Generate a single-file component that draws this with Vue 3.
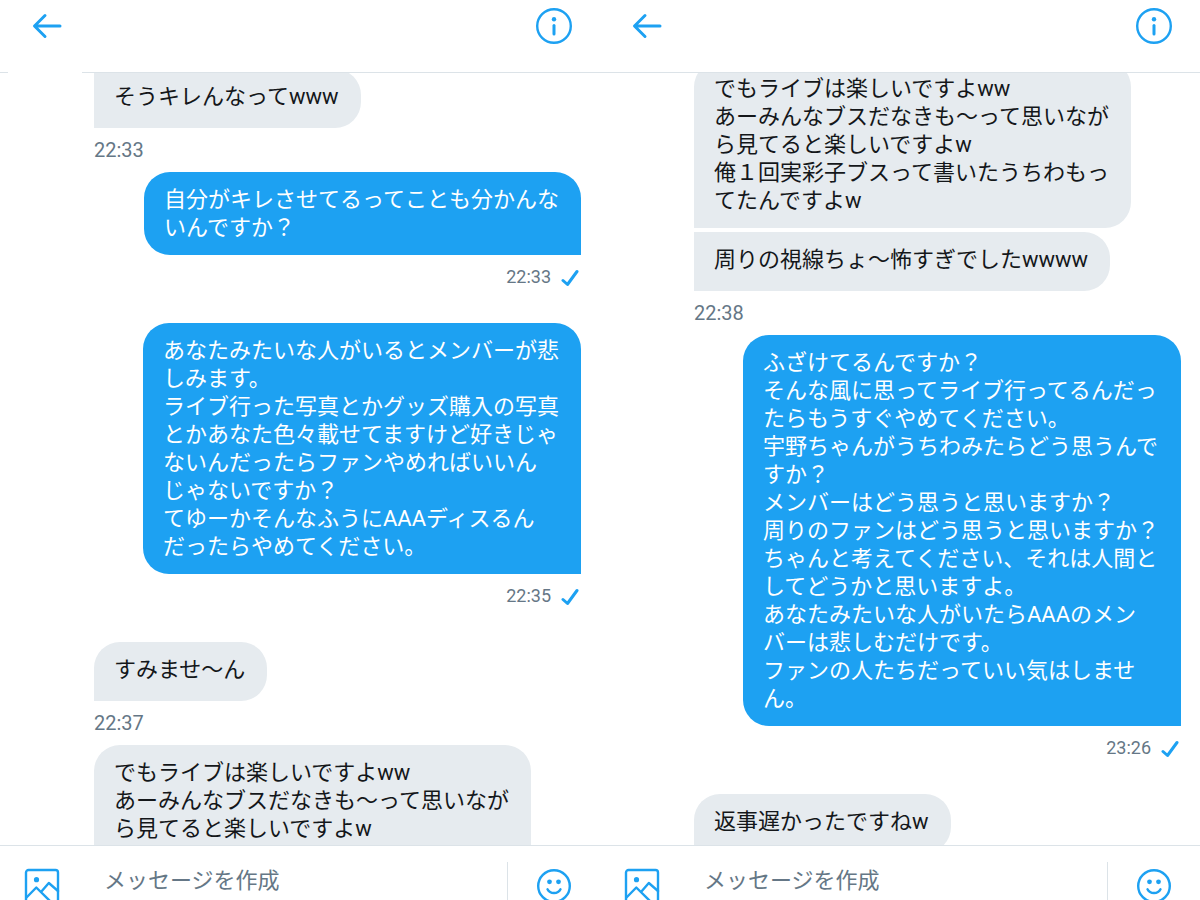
<template>
  <main class="screens">
    <section v-for="screen in screens" :key="screen.id" class="screen">
      <header class="top-bar">
        <button type="button" class="icon-button" aria-label="戻る">
          <svg width="30" height="30" viewBox="0 0 30 30" class="icon arrow">
            <path d="M28 15H3M13 4.500L2.500 15L13 25.500" />
          </svg>
        </button>
        <button type="button" class="icon-button" aria-label="情報">
          <svg width="38" height="38" viewBox="0 0 38 38" class="icon">
            <circle cx="19" cy="19" r="16.800" />
            <circle cx="19" cy="12.300" r="2.200" class="solid" />
            <path d="M19 18.500V27" class="thick" />
          </svg>
        </button>
      </header>
      <div class="divider" :class="{ broken: screen.brokenDivider }"></div>

      <div class="thread">
        <div class="messages" :class="screen.scroll">
          <div
            v-for="message in screen.messages"
            :key="message.id"
            class="message"
            :class="message.from"
          >
            <p class="bubble" :class="message.shape">{{ message.lines.join('\n') }}</p>
            <div v-if="message.time" class="meta">
              <time>{{ message.time }}</time>
              <svg v-if="message.from === 'me'" width="18" height="18" viewBox="0 0 18 18" class="icon check">
                <path d="M2 11.500L6.500 15.500L16 2.500" />
              </svg>
            </div>
          </div>
        </div>
      </div>

      <form class="composer" @submit.prevent>
        <button type="button" class="icon-button photo" aria-label="画像を追加">
          <svg width="36" height="36" viewBox="0 0 36 36" class="icon">
            <rect x="2" y="2" width="32" height="32" rx="2.500" />
            <circle cx="12.500" cy="11.700" r="2.600" class="solid" />
            <path d="M2.500 29.500L12.300 19.500L26.500 33.500M17 24L24.800 15L34 23" />
          </svg>
        </button>
        <input v-model="drafts[screen.id]" type="text" placeholder="メッセージを作成" aria-label="メッセージを作成" />
        <button type="button" class="icon-button emoji" aria-label="絵文字">
          <svg width="36" height="36" viewBox="0 0 36 36" class="icon">
            <circle cx="18" cy="18" r="15.800" />
            <circle cx="13.500" cy="13.800" r="2.400" class="solid" />
            <circle cx="22.500" cy="13.800" r="2.400" class="solid" />
            <path d="M11.500 21.300C14 26.300 22 26.300 24.500 21.300" />
          </svg>
        </button>
      </form>
    </section>
  </main>
</template>

<script setup>
import { ref } from 'vue';

const drafts = ref({ first: '', second: '' });

const screens = [
  {
    id: 'first',
    scroll: 'scroll-short',
    brokenDivider: true,
    messages: [
      { id: 1, from: 'them', shape: 'joined', time: '22:33', lines: ['そうキレんなってwww'] },
      { id: 2, from: 'me', time: '22:33', lines: ['自分がキレさせてるってことも分かんな', 'いんですか？'] },
      {
        id: 3,
        from: 'me',
        time: '22:35',
        lines: [
          'あなたみたいな人がいるとメンバーが悲',
          'しみます。',
          'ライブ行った写真とかグッズ購入の写真',
          'とかあなた色々載せてますけど好きじゃ',
          'ないんだったらファンやめればいいん',
          'じゃないですか？',
          'てゆーかそんなふうにAAAディスるん',
          'だったらやめてください。',
        ],
      },
      { id: 4, from: 'them', time: '22:37', lines: ['すみませ〜ん'] },
      {
        id: 5,
        from: 'them',
        shape: 'cut',
        lines: ['でもライブは楽しいですよww', 'あーみんなブスだなきも〜って思いなが', 'ら見てると楽しいですよw'],
      },
    ],
  },
  {
    id: 'second',
    scroll: 'scroll-long',
    brokenDivider: false,
    messages: [
      {
        id: 6,
        from: 'them',
        lines: [
          'でもライブは楽しいですよww',
          'あーみんなブスだなきも〜って思いなが',
          'ら見てると楽しいですよw',
          '俺１回実彩子ブスって書いたうちわもっ',
          'てたんですよw',
        ],
      },
      { id: 7, from: 'them', shape: 'joined', time: '22:38', lines: ['周りの視線ちょ〜怖すぎでしたwwww'] },
      {
        id: 8,
        from: 'me',
        time: '23:26',
        lines: [
          'ふざけてるんですか？',
          'そんな風に思ってライブ行ってるんだっ',
          'たらもうすぐやめてください。',
          '宇野ちゃんがうちわみたらどう思うんで',
          'すか？',
          'メンバーはどう思うと思いますか？',
          '周りのファンはどう思うと思いますか？',
          'ちゃんと考えてください、それは人間と',
          'してどうかと思いますよ。',
          'あなたみたいな人がいたらAAAのメン',
          'バーは悲しむだけです。',
          'ファンの人たちだっていい気はしませ',
          'ん。',
        ],
      },
      { id: 9, from: 'them', lines: ['返事遅かったですねw'] },
    ],
  },
];
</script>

<style>
body {
  background: #fff;
}
</style>

<style scoped>
.screens {
  display: flex;
  height: 100vh;
  overflow: hidden;
  font-family: Roboto, "Noto Sans CJK JP", sans-serif;
  color: #14171a;
}

.screen {
  display: flex;
  flex: 1;
  flex-direction: column;
  min-width: 0;
}

.top-bar {
  display: flex;
  flex-shrink: 0;
  justify-content: space-between;
  align-items: center;
  height: 52px;
  padding: 0 27px 0 32px;
  margin-bottom: 20px;
}

.icon-button {
  display: flex;
  flex-shrink: 0;
  padding: 0;
  border: none;
  background: none;
  cursor: pointer;
}

.icon {
  display: block;
  fill: none;
  stroke: #1da1f2;
  stroke-width: 2.4;
  stroke-linecap: round;
  stroke-linejoin: round;
}

.icon .solid {
  fill: #1da1f2;
  stroke: none;
}

.icon.arrow,
.icon.check,
.icon .thick {
  stroke-width: 3;
}

.divider {
  flex-shrink: 0;
  height: 1px;
  background: #dce3e8;
}

.divider.broken {
  background: linear-gradient(to right, #dce3e8 8px, #fff 8px, #fff 82px, #dce3e8 82px);
}

.thread {
  flex: 1;
  min-height: 0;
  padding: 0 19px 0 94px;
  overflow: hidden;
}

.messages {
  display: flex;
  flex-direction: column;
}

.messages.scroll-short {
  margin-top: -4px;
}

.messages.scroll-long {
  margin-top: -12px;
}

.message {
  display: flex;
  flex-direction: column;
  align-items: flex-start;
}

.message.me {
  align-items: flex-end;
}

.bubble {
  box-sizing: border-box;
  min-height: 59px;
  margin: 0;
  padding: 14px 22px 13px 20px;
  border-radius: 26px 26px 26px 0;
  background: #e6ebef;
  font-size: 22px;
  line-height: 28px;
  white-space: pre;
}

.me .bubble {
  border-radius: 26px 26px 0 26px;
  background: #1da1f2;
  color: #fff;
}

.bubble.joined {
  border-top-left-radius: 0;
}

.bubble.cut {
  border-bottom-right-radius: 0;
}

/* consecutive messages without a time stamp between them */
.bubble:last-child {
  margin-bottom: 4px;
}

.meta {
  display: flex;
  align-items: center;
  height: 44px;
  color: #657786;
  font-size: 20px;
}

.me .meta {
  gap: 10px;
  height: 42px;
  padding-right: 2px;
  margin-bottom: 26px;
  font-size: 18px;
}

.check {
  margin-top: 4px;
}

.composer {
  display: flex;
  flex-shrink: 0;
  align-items: flex-start;
  box-sizing: border-box;
  height: 55px;
  padding: 0 28px 0 24px;
  border-top: 1px solid #dce3e8;
  overflow: hidden;
}

.photo {
  padding-top: 22px;
}

.composer input {
  flex: 1;
  min-width: 0;
  height: 32px;
  margin: 18px 0 0 44px;
  padding: 0;
  border: none;
  outline: none;
  background: none;
  color: #14171a;
  font-family: inherit;
  font-size: 22px;
}

.composer input::placeholder {
  color: #657786;
  opacity: 1;
}

.emoji {
  margin-top: 16px;
  padding: 6px 0 0 28px;
  border-left: 1px solid #dce3e8;
}
</style>
